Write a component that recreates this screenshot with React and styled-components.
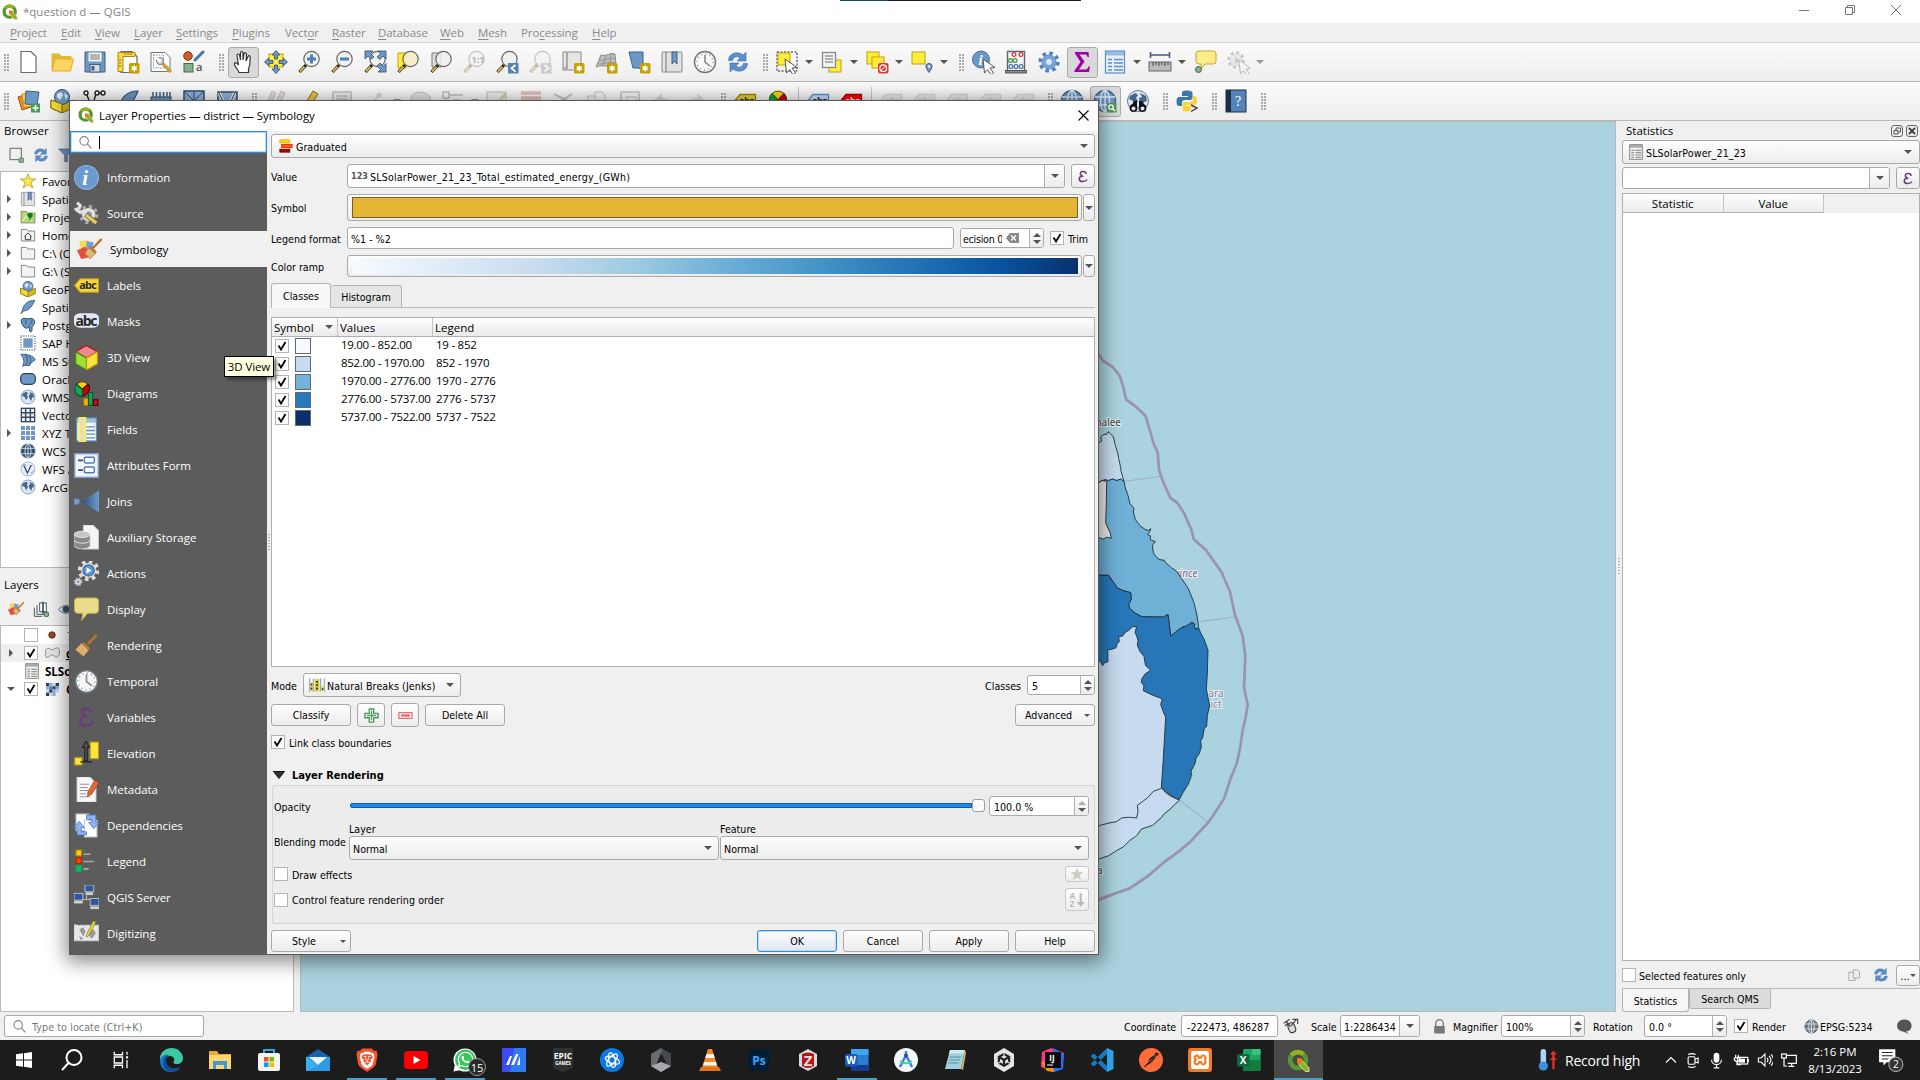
import React from "react";
import styled, { createGlobalStyle, css } from "styled-components";
import { SiBrave, SiUnity, SiPostman, SiXampp } from "react-icons/si";
import { FaWhatsapp } from "react-icons/fa";

const segoe = '"Open Sans", "Noto Sans", sans-serif';
const tahoma = '"DejaVu Sans Condensed", "Open Sans", sans-serif';

const Global = createGlobalStyle`
  * { box-sizing: border-box; }
  body { margin: 0; background: #f0f0f0; overflow: hidden; }
  svg { display: block; flex: none; }
`;

/* ---------- drawing helpers ---------- */
const Badge = () => (
  <g>
    <rect x="13" y="13" width="10.500" height="10.500" rx="1.500" fill="#c4a000" />
    <path d="M18.200 14.500l1 2.200 2.400-.4-1.500 2 1.500 2-2.400-.3-1 2.200-1-2.200-2.400.3 1.500-2-1.500-2 2.400.4z" fill="#fff" />
  </g>
);
const Lens = ({ children, fill = "#eeeeec" }) => (
  <g>
    <path d="M9 15L2.500 22" stroke="#222" strokeWidth="3.200" />
    <path d="M7.500 16.700L3 21.500" stroke="#e8b83a" strokeWidth="1.900" />
    <circle cx="14.500" cy="9" r="7.700" fill={fill} fillOpacity=".85" stroke="#666" strokeWidth="1.200" />
    {children}
  </g>
);
const Cursor = ({ x = 10, y = 8 }) => (
  <path transform={`translate(${x} ${y})`} d="M0 0l12 8.500-5 .5 3.500 5-2.500 1.800-3.300-5.200-3.200 3.400z" fill="#fff" stroke="#555" />
);
const Globe = ({ c = "#6d97c4" }) => (
  <g fill="none" stroke="#dce8f5" strokeWidth="1.300">
    <circle cx="12" cy="12" r="10.500" fill={c} stroke="#45607f" />
    <ellipse cx="12" cy="12" rx="4.500" ry="10.500" />
    <path d="M2 8h20M2 16h20M12 1.500v21" />
  </g>
);
const Earth = () => (
  <g>
    <circle cx="12" cy="12" r="10.500" fill="#dbe7f5" stroke="#5b7da5" />
    <path d="M4 7l5-3 3 2-2 3 2 3-3 5-2-5-4-2zM14 4l6 3 1 5-3 1-1 5-3-4-1-5 3-1z" fill="#45658b" />
  </g>
);
const Tag = ({ f, s, t = "#2b2b2b" }) => (
  <g>
    <path d="M7 5.500h15.500v12H7l-5-6z" fill={f} stroke={s} strokeWidth="1.300" />
    <text x="6" y="15" fontSize="9.500" fontWeight="700" fontFamily={segoe} fill={t} textLength="15">abc</text>
  </g>
);
const Brush = () => (
  <g>
    <path d="M21 2.500L14 10" stroke="#b5762a" strokeWidth="2.600" strokeLinecap="round" />
    <path d="M9.500 9l6 5.500-2 3-7.500-7z" fill="#b87a34" />
    <path d="M7 10l7 6.500-5 6L1.500 16z" fill="#e2b57a" stroke="#b5803f" strokeWidth=".8" />
    <path d="M6 12l5 8M4 14l5 7" stroke="#c9975a" strokeWidth=".7" />
  </g>
);
const Pencil = () => (
  <g><path d="M16 2l5 3-9 14-4 2.500-1-4.500z" fill="#e9c840" stroke="#7a6a20" /><path d="M8 21l1-4 3 2z" fill="#444" /></g>
);
const QLogo = () => (
  <g>
    <circle cx="11.500" cy="11.500" r="8.300" fill="none" stroke="#589632" strokeWidth="5" />
    <path d="M4.800 6.500A8.300 8.300 0 0 1 17 5.500" fill="none" stroke="#93b023" strokeWidth="5" />
    <path d="M12.500 12.500l3.500 0 7 7v4h-4l-6.500-7z" fill="#93b023" stroke="#fff" strokeWidth=".7" />
    <path d="M10.500 9.500l5 .5 1.500 2-5 4-1.500-1.500z" fill="#ee7913" />
  </g>
);
const Doc = ({ x = 4, w = 15 }) => (
  <path d={`M${x} 1.500h${w - 5}l5 5v16h-${w}z`} fill="#fff" stroke="#6a6a6a" strokeWidth="1.200" />
);
const Refresh = () => (
  <g fill="#5b8fcb" stroke="#3d6fa8" strokeWidth=".6">
    <path d="M2.500 10.500C2.500 3 12 .5 17 5l3-3v9h-9l3-3c-3-2.500-6.500-1-7.500 2.500z" />
    <path d="M21.500 13.500C21.500 21 12 23.500 7 19l-3 3v-9h9l-3 3c3 2.500 6.500 1 7.500-2.500z" />
  </g>
);
const Bin = () => (
  <g fill="#111">
    <circle cx="7.500" cy="19" r="3.900" /><circle cx="16.500" cy="19" r="3.900" />
    <path d="M8 12h3v6H5zM13 12h3l3 6h-6z" /><circle cx="7.500" cy="19.500" r="2" fill="#dbe7f5" /><circle cx="16.500" cy="19.500" r="2" fill="#dbe7f5" />
  </g>
);
const Gear = ({ cx = 12, cy = 12, r = 8, f = "#d3d7cf", s = "#777", inner = "#fff" }) => (
  <g>
    <circle cx={cx} cy={cy} r={r} fill="none" stroke={s} strokeWidth={r * 0.5} strokeDasharray={`${r * 0.393} ${r * 0.393}`} />
    <circle cx={cx} cy={cy} r={r * 0.85} fill={f} stroke={s} strokeWidth=".5" />
    <circle cx={cx} cy={cy} r={r * 0.4} fill={inner} stroke={s} strokeWidth=".5" />
  </g>
);
const Table = ({ c = "#5b8ec4", f = "#e8f1fb" }) => (
  <g>
    <rect x="2.500" y="1" width="19" height="22" fill={f} stroke={c} strokeWidth="1.200" />
    <rect x="3" y="1.500" width="18" height="4" fill={c} opacity=".55" />
    <path d="M5 9.500h4M11 9.500h9M5 13h4M11 13h9M5 16.500h4M11 16.500h9M5 20h4M11 20h9" stroke={c} strokeWidth="1.300" />
  </g>
);
const Folder = ({ children }) => (
  <g><path d="M2 3.500h8l2 2.500h10v15H2z" fill="#f3f3f3" stroke="#777" strokeWidth="1.300" />{children}</g>
);
const Book = () => (
  <g><rect x="2" y="2" width="20" height="20" rx="1" fill="#e2e2e2" stroke="#888" /><path d="M6 2v20" stroke="#999" strokeWidth="1.500" /><path d="M12 2h5v12l-2.500-3-2.500 3z" fill="#6d97c4" stroke="#3d5f88" /></g>
);
const Page = ({ x, y }) => <path d={`M${x} ${y}h7l3 3v10h-10z`} fill="#eee" stroke="#666" />;

const icons = {
  qgis: <QLogo />,
  doc: <Doc />,
  open: <g><path d="M1.500 20V3.500h8l2 2.500h10v4z" fill="#e2b93a" /><path d="M5 9h18.500l-3 12H2z" fill="#fcd462" stroke="#dcae2f" /></g>,
  save: <g><path d="M2 2h20v20H2z" fill="#6d97c4" stroke="#3f5f86" /><rect x="5.500" y="2.500" width="13" height="9" fill="#f5f5f5" /><path d="M7 5h10M7 7h10M7 9h10" stroke="#777" /><rect x="7" y="14.500" width="10" height="7.500" fill="#dedede" stroke="#3f5f86" /><rect x="8.500" y="16" width="3" height="4.500" fill="#3f5f86" /></g>,
  layout: <g><Doc x={5} w={16} /><path d="M2 2.500h17v4H7v15H2z" fill="#fcd94c" stroke="#b08d00" /><path d="M9 5V3M12 5V3M15 5V3M3 10h2M3 13h2M3 16h2" stroke="#8a6e00" /><Badge /></g>,
  layoutMgr: <g><path d="M2 2.500h14l5 5v14H2z" fill="#fff" stroke="#777" /><rect x="4.500" y="5" width="10" height="13" fill="none" stroke="#6d97c4" strokeDasharray="1.500 1" /><path d="M12 12l10 10" stroke="#c9a03a" strokeWidth="3.500" /><circle cx="11" cy="11" r="3.500" fill="#ddd" stroke="#777" /><path d="M8 8l3 3" stroke="#fff" strokeWidth="2.500" /></g>,
  style: <g><circle cx="6" cy="6" r="4.300" fill="#cf5a2a" stroke="#8a3512" /><rect x="2" y="13.500" width="9" height="8.500" fill="#86b08e" stroke="#426b4a" /><path d="M21 2l-8 8" stroke="#4677aa" strokeWidth="3" strokeLinecap="round" /><text x="14" y="21" fontSize="11.500" fontFamily={segoe} fill="#222">a</text></g>,
  hand: <path d="M8 22.500C7 19 2.500 15.500 3.500 13.500s3 0 4 1.500L6 5.500c0-2 2.300-2 2.600 0L9.500 10V3c0-2 2.500-2 2.500 0v7l1-6c.3-2 2.600-1.500 2.500.3L15 11l2-4.500c.8-1.500 2.500-.8 2.200.8C18.500 11 20 14 17.500 19v3.500z" fill="#fff" stroke="#333" strokeWidth="1.200" />,
  panSel: <g><rect x="5" y="4" width="14" height="13" fill="#ffec3d" stroke="#c4a000" /><path d="M12 .5l4 4.500h-2.500v4h-3V5H8zM12 23.500L8 19h2.500v-4h3v4H16zM.5 12L5 8v2.500h4v3H5V16zM23.500 12L19 8v2.500h-4v3h4V16z" fill="#6d97c4" stroke="#2f4d6e" strokeWidth=".8" /></g>,
  zoomIn: <Lens><path d="M14.500 4.500v9M10 9h9" stroke="#4b7fb8" strokeWidth="3" /></Lens>,
  zoomOut: <Lens><path d="M10 9h9" stroke="#4b7fb8" strokeWidth="3" /></Lens>,
  zoomFull: <g><Lens /><path d="M2 1h8L7.500 3.500 11 7 8 9 5 6 2 9zM23 1h-8l2.500 2.500L14 7l3 2.500L20 6l3 3zM23 22h-8l2.500-2.500L14 16l3-3 3 3.500 3-3z" fill="#6d97c4" stroke="#2f4d6e" strokeWidth=".8" /></g>,
  zoomSel: <g><path d="M2 3h8v15H2z" fill="#ffec3d" stroke="#c4a000" /><Lens fill="#f6efc0" /></g>,
  zoomLayer: <g><path d="M3 3h9v14H3z" fill="#ddd" stroke="#777" /><Lens /></g>,
  zoomNative: <Lens><text x="9.500" y="12.500" fontSize="9" fontFamily={segoe} fontWeight="700" fill="#333">1:1</text></Lens>,
  zoomLast: <g><Lens /><rect x="13" y="13" width="10.500" height="10.500" fill="#5682b3" /><path d="M20.500 15l-4 3.300 4 3.300" fill="none" stroke="#fff" strokeWidth="1.800" /></g>,
  zoomNext: <g><Lens /><rect x="13" y="13" width="10.500" height="10.500" fill="#888" /><path d="M16.500 15l4 3.300-4 3.300" fill="none" stroke="#fff" strokeWidth="1.800" /></g>,
  newMap: <g><path d="M2 2h18v18H2z" fill="#e6e6e6" stroke="#888" /><path d="M6 2v18M2 20l3-3" stroke="#aaa" strokeWidth="2" /><Badge /></g>,
  new3d: <g><path d="M7 5c6 2 8-3 14-1l1 11c-7 3-13-1-20 2z" fill="#bdbdbd" stroke="#8a8a8a" /><path d="M5 10c7 1 10-3 16-1M4 14c7 0 11-3 18-1M12 5l-3 11M17 4l-1 12" fill="none" stroke="#8a8a8a" strokeWidth=".8" /><Badge /></g>,
  newBook: <g><path d="M2 2h14v19l-4-3H6z" fill="#6d97c4" stroke="#3d5f88" /><Badge /></g>,
  book: <Book />,
  clock: <g><circle cx="12" cy="12" r="10.500" fill="#f7f7f7" stroke="#777" strokeWidth="1.500" /><circle cx="12" cy="12" r="8" fill="none" stroke="#6d97c4" strokeWidth="1.500" strokeDasharray="1 3.190" /><path d="M12 5v7l5 4" fill="none" stroke="#888" strokeWidth="1.600" /></g>,
  refresh: <Refresh />,
  selRect: <g><rect x="2" y="2" width="20" height="19" fill="none" stroke="#222" strokeDasharray="2 1.500" /><rect x="3" y="3" width="12" height="12" fill="#ffec3d" stroke="#c4a000" /><Cursor x={10} y={9} /></g>,
  selForm: <g><rect x="9" y="10" width="12" height="12" fill="#ffec3d" stroke="#c4a000" /><rect x="2.500" y="2.500" width="13" height="15" fill="#f3f3f3" stroke="#888" strokeWidth="1.300" /><path d="M5 6h8M5 9h8M5 12h8" stroke="#999" strokeWidth="1.500" /></g>,
  deselect: <g><rect x="2" y="2" width="12" height="12" fill="#ffec3d" stroke="#c4a000" /><rect x="7" y="7" width="12" height="11" fill="#ffec3d" stroke="#c4a000" /><rect x="13" y="13" width="10.500" height="10.500" rx="2" fill="#dc3b3b" /><circle cx="18.200" cy="18.200" r="3.300" fill="none" stroke="#fff" strokeWidth="1.200" /><path d="M16 20.500l4.500-4.500" stroke="#fff" /></g>,
  selLoc: <g><rect x="2" y="2" width="13" height="12" fill="#ffec3d" stroke="#c4a000" /><path d="M19 22.500c-4-5-4-9 0-9s4 4 0 9z" fill="#6d97c4" stroke="#45607f" /><circle cx="19" cy="16.500" r="1.200" fill="#fff" /></g>,
  identify: <g><circle cx="10" cy="9.500" r="8.500" fill="#6d97c4" stroke="#45709f" /><text x="7.500" y="15" fontSize="15" fontStyle="italic" fontWeight="700" fontFamily='"Liberation Serif", serif' fill="#fff">i</text><Cursor x={12} y={9} /></g>,
  abacus: <g><path d="M3 1.500h18M3.500 1v21M20.500 1v21" stroke="#666" strokeWidth="1.400" /><rect x="1.500" y="20.500" width="21" height="2.500" fill="#888" stroke="#444" strokeWidth=".8" /><g fill="#fff" strokeWidth="1.200"><g stroke="#c33"><circle cx="10" cy="4.500" r="1.900" /><circle cx="17" cy="4.500" r="1.900" /></g><g stroke="#3a9a3a"><circle cx="6.500" cy="10.500" r="1.900" /><circle cx="11" cy="10.500" r="1.900" /></g><g stroke="#3d6fa8"><circle cx="7" cy="16.500" r="1.900" /><circle cx="12" cy="16.500" r="1.900" /><circle cx="17" cy="16.500" r="1.900" /></g></g></g>,
  gear: <Gear r={8.500} f="#78a4dc" s="#4f7fbd" inner="#dce9f8" />,
  sigma: <path d="M5 2h13.500l.5 5h-1.500c-.5-2-1.500-2.500-3-2.500H9.500l5 7-5.500 8h6c2 0 3-1 3.500-3H20l-1 5.500H4.500v-1.500l6-8.500L5 3.500z" fill="#a000a8" />,
  table: <Table />,
  ruler: <g><path d="M2 5h20M2.500 2v6M21.500 2v6" stroke="#3f5f86" strokeWidth="1.600" /><rect x="1" y="12" width="22" height="9" fill="#bbb" stroke="#666" /><path d="M5 12v4M8 12v3M11 12v4M14 12v3M17 12v4M20 12v3" stroke="#444" /></g>,
  tip: <g><path d="M6 1h14a3 3 0 0 1 3 3v7a3 3 0 0 1-3 3h-8l-4 5v-5H6a3 3 0 0 1-3-3V4a3 3 0 0 1 3-3z" fill="#f9ec8c" stroke="#c9a52a" /><circle cx="5.500" cy="19.500" r="3" fill="#86b08e" stroke="#426b4a" /></g>,
  actions: <g><Gear cx={10} cy={10} r={7} /><path d="M9 7.500l5 3-5 3z" fill="#777" /><Cursor x={13} y={10} /></g>,
  layersAdd: <g><path d="M1 8l9-3 4 13-9 3z" fill="#e5883a" stroke="#a84f12" /><path d="M5 5l10-2 2 14-10 1z" fill="#fcd94c" stroke="#c4a000" /><path d="M9 2l13 1-2 13-12-1z" fill="#6d97c4" stroke="#3f5f86" /><rect x="14" y="14.500" width="9" height="9" fill="#4f9a58" /><path d="M18.500 16v6M15.500 19h6" stroke="#fff" strokeWidth="1.600" /></g>,
  geopkg: <g><path d="M1 11l11 4 11-4v8l-11 5-11-5z" fill="#d8b91c" stroke="#7d6a0a" /><circle cx="12" cy="8" r="7.500" fill="#6d97c4" stroke="#34506f" /><path d="M7 5l4-2 2 3-3 5-3-3zM14 4l4 3-2 4z" fill="#dbe7f5" /><path d="M1 11l11 4v9l-11-5z" fill="#f3d936" stroke="#7d6a0a" /></g>,
  shp: <g fill="none" stroke="#222" strokeWidth="1.400"><path d="M3 4l6 14 4-13 6-1" /><circle cx="3" cy="4" r="2" fill="#fff" /><circle cx="14" cy="4" r="2" fill="#fff" /><circle cx="20" cy="4" r="2" fill="#fff" /></g>,
  feather: <path d="M22 2C12 2 5 8 3.500 17L1.500 22l4-4C14 17 18 12 22 2z" fill="#6d97c4" stroke="#34506f" strokeWidth="1.200" />,
  chip: <g><rect x="2" y="8" width="20" height="12" fill="#6d97c4" stroke="#34506f" /><path d="M4 8V3M7.500 8V3M11 8V3M14.500 8V3M18 8V3M21 8V3" stroke="#34506f" strokeWidth="1.400" /></g>,
  mesh: <g><rect x="2" y="2" width="20" height="20" fill="#8db0da" stroke="#2f4d6e" strokeWidth="1.500" /><path d="M2 2l20 20M22 2L2 22M12 2v10" stroke="#2f4d6e" /></g>,
  virtual: <g><rect x="3" y="3" width="19" height="19" fill="#8db0da" stroke="#2f4d6e" strokeWidth="1.500" /><path d="M4 4l8 16 8-16" fill="none" stroke="#fff" strokeWidth="3" /><path d="M4 4l8 16 8-16" fill="none" stroke="#222" /></g>,
  pencils: <g><path d="M8 2l4 2-7 14-3 2V16zM17 2l4 2-8 16-3 1V17z" fill="#c9a0a0" stroke="#666" /></g>,
  pencil: <Pencil />,
  saveEdit: <g><rect x="3" y="3" width="18" height="16" fill="#ddd" stroke="#555" strokeWidth="1.500" /><path d="M6 7h12M6 10h12" stroke="#555" strokeWidth="1.500" /></g>,
  addPt: <g><path d="M4 20L15 7" stroke="#555" /><circle cx="16" cy="6" r="2.500" fill="#999" /></g>,
  poly: <path d="M3 8c3-7 16-6 19 0s-5 7-9 5-9 5-10-5z" fill="#bbb" stroke="#555" />,
  node: <g fill="none" stroke="#555" strokeWidth="1.500"><rect x="2" y="3" width="6" height="6" /><path d="M8 6h14M12 11h8M5 9v10" /></g>,
  attrEdit: <g><rect x="1" y="3" width="19" height="16" fill="#ddd" stroke="#555" /><path d="M20 4L9 18" stroke="#a08a20" strokeWidth="3" /></g>,
  del: <g><path d="M2 4h20M2 9h20M2 14h20" stroke="#c05050" strokeWidth="3.500" /></g>,
  cut: <path d="M2 5l18 9M20 5L4 15" stroke="#555" strokeWidth="1.600" />,
  copy: <g><Page x={3} y={7} /><Page x={10} y={3} /></g>,
  paste: <g><rect x="3" y="3" width="18" height="18" fill="#eee" stroke="#666" strokeWidth="1.500" /><rect x="9" y="8" width="9" height="9" fill="#fff" stroke="#666" /></g>,
  undo: <path d="M2 12l9-8v5c7 0 10 4 10 10-3-4-5-5-10-5v5z" fill="#b09a90" />,
  redo: <path d="M22 12l-9-8v5C6 9 3 13 3 19c3-4 5-5 10-5v5z" fill="#aaa" />,
  tagY: <Tag f="#e6cd3a" s="#a08500" />,
  tagB: <Tag f="#c9dcf5" s="#5a8fd6" />,
  tagR: <Tag f="#f00" s="#a00" t="#fff" />,
  tagG: <Tag f="#d5d5cc" s="#999" t="#888" />,
  pie: <g><path d="M12 11L6 4.500a9 9 0 0 1 12 0z" fill="#ffd400" stroke="#665500" /><path d="M12 11l6-6.500c4 4 3 11-1 13z" fill="#d00000" stroke="#500" /><path d="M12 11L6 4.500C2 8 3 15 7 17.500z" fill="#1aa33c" stroke="#053" /></g>,
  globe: <Globe />,
  globeDark: <Globe c="#34506f" />,
  globeZ: <g><Globe /><rect x="14" y="14" width="9.500" height="9.500" fill="#4f9a58" /><circle cx="18" cy="18" r="2.200" fill="none" stroke="#fff" strokeWidth="1.300" /><path d="M19.500 19.500l2.500 2.500" stroke="#fff" strokeWidth="1.300" /></g>,
  globeB: <g><Earth /><Bin /></g>,
  python: <g><path d="M12 1.500c-5 0-5 1.500-5 3V7h6v1H4.500C2 8 1.500 10 1.500 12.500S2 17 4.500 17H7v-3c0-2 1-3 3-3h5c1.500 0 2.500-1 2.500-2.500v-4c0-2-1.500-3-5.500-3z" fill="#3b76a8" /><path d="M11 22.500c5 0 5-1.500 5-3V17h-5v-1h8c2.500 0 3-2 3-4.500S21.500 7 19 7h-1v3c0 2-1 3-3 3h-5c-1.500 0-2.500 1-2.500 2.500v4c0 2 0 3 3.500 3z" fill="#fbd43c" /><path d="M16 16l6 3-6 3.500" fill="none" stroke="#444" strokeWidth="1.400" /></g>,
  help: <g><rect x="2" y="1" width="20" height="22" fill="#5384ba" stroke="#1d2f45" /><rect x="2" y="1" width="5" height="22" fill="#1d2f45" /><text x="11" y="17" fontSize="14" fontFamily='"Liberation Serif", serif' fill="#fff">?</text></g>,
  addBox: <g><rect x="3" y="2" width="17" height="17" fill="none" stroke="#666" strokeWidth="1.500" /><circle cx="20" cy="20" r="4" fill="#86b08e" stroke="#426b4a" /></g>,
  filter: <path d="M1 3h21l-8 9v10h-4V12z" fill="#6d97c4" stroke="#45607f" />,
  star: <path d="M12 1l3 8h8.500l-7 5 2.700 8.500L12 17.500 4.800 22.500 7.500 14l-7-5H9z" fill="#fbe84b" stroke="#a58a10" />,
  project: <g><path d="M1.500 3.500h8l2 2.500h11v15h-21z" fill="#b5d96a" stroke="#667" /><path d="M4 18l6-8 8 9" fill="none" stroke="#fff" strokeWidth="1.500" /><path d="M15 17V8" stroke="#0b7d1c" strokeWidth="2" /><circle cx="15" cy="9.500" r="4" fill="#0b7d1c" /></g>,
  home: <Folder><path d="M6.500 14L12 9l5.500 5M8 13.500V19h8v-5.500" fill="none" stroke="#444" strokeWidth="1.500" /></Folder>,
  folder: <Folder />,
  elephant: <g><path d="M2 4c3-3 7-2 10-1 4-2 9-1 10 4 0 4-3 7-4 8v5c0 3-4 3-4 0v-6l-4 3-3-1C4 13 1 8 2 4z" fill="#6d97c4" stroke="#2f4d6e" strokeWidth="1.500" /><path d="M9 4v7M17 4c2 3 0 6-3 7" fill="none" stroke="#2f4d6e" strokeWidth="1.300" /></g>,
  sap: <g><rect x="1.500" y="1.500" width="21" height="21" fill="none" stroke="#222" strokeWidth="1.500" strokeDasharray="1.500 2" /><rect x="5" y="5" width="14" height="14" fill="#6d97c4" /></g>,
  mssql: <path d="M1 2c8-1 20 2 22 8-3 3-7 4-9 9C9 19 8 18 4 20c3-7 2-12-3-18zM8 2c4 6 4 12 0 17M13 4c4 5 4 10 0 14" fill="#6d97c4" stroke="#34506f" strokeWidth="1.200" />,
  oracle: <rect x="1" y="4" width="22" height="16" rx="6" fill="#6d97c4" stroke="#2c425c" strokeWidth="1.800" />,
  earth: <Earth />,
  grid: <g><rect x="2" y="2" width="20" height="20" fill="#eef3f9" stroke="#3a4a5c" strokeWidth="2" /><path d="M2 8.500h20M2 15.500h20M8.500 2v20M15.500 2v20" stroke="#3a4a5c" strokeWidth="2.200" /></g>,
  dots9: <g fill="#6d97c4">{[1.500, 9, 16.500].map((x) => [1.500, 9, 16.500].map((y) => <rect key={x + "-" + y} x={x} y={y} width="6" height="6" />))}</g>,
  wfs: <g><circle cx="12" cy="12" r="10.500" fill="#e8eff8" stroke="#6d97c4" /><path d="M3 8l4-3 2 3M16 19l4-4" fill="none" stroke="#6d97c4" strokeWidth="1.500" /><path d="M6 7l5 11 6-12" fill="none" stroke="#34506f" strokeWidth="2" /></g>,
  info: <g><circle cx="12" cy="12" r="11.500" fill="#6b9ad0" stroke="#8db4e2" /><text x="8" y="19" fontSize="20" fontStyle="italic" fontWeight="700" fontFamily='"Liberation Serif", serif' fill="#fff">i</text></g>,
  source: <g><Gear cx={14} cy={13} r={7.500} f="#e4e4e4" s="#aaa" inner="#6d97c4" /><path d="M3 1.500l3 3-1 2.500-3 1C4 11 7 11 9 9.500L20 21" fill="none" stroke="#e0e0e0" strokeWidth="3" /><path d="M11 13l11 8.500" stroke="#6e5a22" strokeWidth="4.600" /><path d="M11.500 13.400l10 7.700" stroke="#e5c76c" strokeWidth="3.200" /></g>,
  symbology: (
    <g>
      <path d="M2 4l9-1 2 6-9 3z" fill="#fcd94c" />
      <path d="M9 4l7 1-1 8-6-1z" fill="#6f9fdc" />
      <path d="M0 13l8-4 6 10-10 2z" fill="#e3503f" />
      <path d="M23 2.500l-7 7.500" stroke="#b5762a" strokeWidth="2.200" strokeLinecap="round" />
      <path d="M13 8.500l6 5.500-1.500 2.500-7-5.500z" fill="#b87a34" />
      <path d="M11.500 10.500l6 5.500-5 5-5-5.500z" fill="#e2b57a" stroke="#b5803f" strokeWidth=".7" />
    </g>
  ),
  labels: <g><path d="M6 5.500h17.500v13H6L.5 12z" fill="#f4d73a" stroke="#c0a010" /><text x="5" y="15.500" fontSize="10.500" fontWeight="700" fontFamily={segoe} fill="#2b2b2b" textLength="17">abc</text></g>,
  masks: <g><rect x="-.5" y="4" width="25" height="14" rx="6" fill="#dfe6f5" /><text x="1.500" y="16.500" fontSize="13.500" fontWeight="700" fontFamily={segoe} fill="#2b2b2b" textLength="21">abc</text></g>,
  cube: <g strokeLinejoin="round"><path d="M12 .5l10.500 6L12 12.500 1.500 6.500z" fill="#f28a8a" stroke="#b11" strokeWidth="1.200" /><path d="M1.500 6.500l10.500 6v11.500L1.500 18z" fill="#9be03a" stroke="#3c8a12" strokeWidth="1.200" /><path d="M22.500 6.500L12 12.500V24l10.500-6z" fill="#fbe33c" stroke="#c09a10" strokeWidth="1.200" /></g>,
  diagrams: <g><path d="M8 8L2.500 3a8 8 0 0 1 11 0z" fill="#ffcf00" stroke="#443" /><path d="M8 8l5.500-5c3 4 2 8-5.500 12z" fill="#c00" stroke="#400" /><path d="M8 8v7C1 14-1 8 2.500 3z" fill="#17a35a" stroke="#053" /><rect x="9.500" y="17" width="4" height="6.500" fill="#ffb400" stroke="#b87a00" /><rect x="14" y="11" width="4" height="12.500" fill="#17a35a" stroke="#053" /><rect x="18.500" y="18" width="4.500" height="5.500" fill="#b11" stroke="#500" /></g>,
  fields: <g><Table f="#f3f7fc" /><rect x="5" y="0" width="6" height="24" fill="#e9dfb0" stroke="#fdf24c" strokeWidth="1.500" /></g>,
  form: <g><rect x=".7" y=".7" width="22.600" height="22.600" fill="#f2f5f9" stroke="#7fa3cd" strokeWidth="1.400" /><rect x="10" y="4" width="9.500" height="5.500" rx="1" fill="#fff" stroke="#4b7fb8" strokeWidth="1.400" /><rect x="10" y="13.500" width="9.500" height="5.500" rx="1" fill="#fff" stroke="#4b7fb8" strokeWidth="1.400" /><path d="M4 7h4.500M4 16.500h4.500" stroke="#3a4a5c" strokeWidth="1.600" /></g>,
  joins: <g><circle cx="2.500" cy="12" r="3" fill="#6d9bd0" /><path d="M7 12L24 1.500v21z" fill="url(#joinFade)" /></g>,
  aux: <g><path d="M9 0h9l5.500 5.500V23H9z" fill="#f5f5f5" stroke="#ccc" /><path d="M0 9v11c2 4 14 4 15.500 0V9z" fill="#888" stroke="#ddd" strokeWidth=".8" /><ellipse cx="7.700" cy="9" rx="7.700" ry="3" fill="#c5c5c5" stroke="#eee" strokeWidth=".8" /><path d="M0 14.500c2 4 14 4 15.500 0" fill="none" stroke="#ddd" /></g>,
  act: <g><Gear cx={14} cy={9} r={8.300} f="#e4e4e4" s="#ddd" /><circle cx="14" cy="9" r="5.500" fill="#5b93d3" stroke="#35659c" /><path d="M12 6l5 3-5 3z" fill="#fff" /><Gear cx={4} cy={20} r={3.300} f="#ddd" s="#ccc" inner="#5b93d3" /></g>,
  display: <path d="M4 1h16q3.500 0 3.500 3.500V12q0 3.500-3.500 3.500h-7L7.500 22l1-6.500H4Q.5 15.500.5 12V4.500Q.5 1 4 1z" fill="#e9dc8c" stroke="#c9b44c" />,
  brush: <Brush />,
  epsilonBig: <path d="M17 7C16 2.500 8.500 2.500 8 6.500c-.2 2.500 2 4.500 4.500 4.500-4.500 0-7 2-6.500 5.500.7 4.500 10 4.500 12 0" fill="none" stroke="#6c3d78" strokeWidth="2.600" strokeLinecap="round" />,
  elev: <g><rect x="15.500" y="1" width="8" height="16" fill="#fbe33c" stroke="#b79a10" /><rect x=".7" y="16" width="7" height="7" fill="#fbe33c" stroke="#b79a10" /><path d="M6 20h11" stroke="#222" strokeWidth="1.200" /><path d="M10.300 19V5.500l-2.300 1 3.500-6.500 3.500 6.500-2.300-1V19z" fill="#555" stroke="#111" strokeWidth=".8" /></g>,
  meta: <g><path d="M3 0h12l6 6v18H3z" fill="#f7f7f7" stroke="#ddd" /><path d="M5.500 7h9M5.500 10h8M5.500 13h8M5.500 16h6M5.500 19h10" stroke="#999" /><path d="M20 3l4 2.500-7 11-4 2 .5-4.500z" fill="#e0673a" stroke="#9c3c14" strokeWidth=".7" /></g>,
  deps: <g><rect x="2" y="1" width="12" height="16" fill="#fff" stroke="#ccc" /><rect x="10" y="7" width="12" height="16" fill="#fff" stroke="#ccc" /><path d="M12 2h9v7h3l-5 6-5-6h3V6h-5zM12 21H3v-7H0l5-6 5 6H7v4h5z" fill="#8fb4ee" stroke="#4b7fc8" strokeWidth=".8" /></g>,
  legend: <g><path d="M9 5h7M9 12h10M9 19h5" stroke="#aaa" strokeWidth="1.600" /><rect x="2" y="1" width="5" height="5.500" fill="#ffcf00" stroke="#c48a00" /><rect x="2" y="8.500" width="5" height="5.500" fill="#f40" stroke="#b32500" /><rect x="2" y="16" width="5" height="5.500" fill="#12b85a" stroke="#0a6" /></g>,
  server: <g><path d="M12 10v4H5M12 14h8" stroke="#bbb" fill="none" /><g stroke="#ccc" strokeWidth=".8"><rect x="10.500" y="0" width="8.500" height="6.500" fill="#2c5a9e" /><rect x="11.500" y="7.500" width="6.500" height="1.800" fill="#ddd" /><rect x="0" y="8" width="8.500" height="6.500" fill="#2c5a9e" /><rect x="0" y="15.500" width="8" height="1.800" fill="#ddd" /><rect x="15.500" y="13" width="8.500" height="6.500" fill="#2c5a9e" /><rect x="16" y="21" width="8" height="1.800" fill="#ddd" /></g></g>,
  digit: <g><path d="M0 4c3-1 4 1 6 0h17.500v15H0z" fill="#e8e8e8" stroke="#ccc" /><path d="M5 8l4-2 2 4-2 5zM13 9l6-1 2 4-4 5-3-3zM5 14l4 3-3 1z" fill="#999" /><path d="M21 1l-7 13-2 1.500V13L18.500 0z" fill="#e9d64c" stroke="#8a7a20" strokeWidth=".7" /></g>,
  grad: <g strokeWidth="1.500"><rect x="1.500" y="1.500" width="17" height="5" fill="#ffe000" stroke="#ffa400" /><rect x="4.500" y="9.500" width="18" height="5" fill="#ff5a1a" stroke="#d03000" /><rect x="1.500" y="17.500" width="17" height="5" fill="#b00000" stroke="#700000" /></g>,
  jenks: <g><path d="M1 2v20M6.500 2v20M17.500 2v20M23 2v20" stroke="#5b8fcb" strokeWidth="1.200" /><g fill="#e8d53a"><rect x="1.700" y="8" width="4" height="13" /><rect x="9" y="4" width="6" height="17" stroke="#b09a10" strokeWidth=".6" /><rect x="18.500" y="14" width="3.700" height="7" /></g><g fill="#222"><rect x="2.500" y="10" width="2.500" height="2.500" /><rect x="2.500" y="16" width="2.500" height="2.500" /><rect x="10.700" y="6" width="2.700" height="2.500" /><rect x="10.700" y="11" width="2.700" height="2.500" /><rect x="10.700" y="16" width="2.700" height="2.500" /><rect x="19.300" y="17" width="2.200" height="2.500" /></g></g>,
  plus: <path d="M8.500 1.500h7v7h7v7h-7v7h-7v-7h-7v-7h7zM12 4.500v15M4.500 12h15" fill="#fff" stroke="#4f9a58" strokeWidth="2.200" />,
  minus: <g><rect x="1.500" y="7.500" width="21" height="9" fill="#fff" stroke="#ee5a5a" strokeWidth="1.800" /><path d="M5 12h14" stroke="#ee5a5a" strokeWidth="3.500" /></g>,
  search: <g fill="none" stroke="#858585" strokeWidth="2.200"><circle cx="9.500" cy="9" r="7.800" /><path d="M15 14.500l8 8.500" /></g>,
  layerNew: <g fill="none" stroke="#555" strokeWidth="1.500"><path d="M6 6v14h12M2 10v13h12" /><rect x="10" y="3" width="10" height="13" fill="#fff" /><path d="M15 1v18" stroke="#34506f" strokeWidth="2.500" /><circle cx="20" cy="20" r="3.800" fill="#86b08e" stroke="#426b4a" /></g>,
  eye: <g><path d="M1 13C5 5 19 5 23 13c-4 7-18 7-22 0z" fill="#dbe7f5" stroke="#777" strokeWidth="1.500" /><circle cx="12" cy="12.500" r="5" fill="#34506f" /></g>,
  polyLayer: <path d="M2 7c5-6 8 2 12-1s8-3 8 4-4 9-8 5-8 5-11 2 1-4-1-10z" fill="#e5e5e5" stroke="#888" strokeWidth="1.300" />,
  tableGray: <Table c="#777" f="#eee" />,
  raster: <g>{["#2c3e5c", "#8fadd4", "#c9d9ee", "#2c3e5c", "#8fadd4", "#5b7da5", "#2c4a75", "#8fadd4", "#c9d9ee", "#2c3e5c", "#8fadd4", "#c9d9ee", "#2c3e5c", "#c9d9ee", "#8fadd4", "#fff"].map((c, i) => <rect key={i} x={(i % 4) * 6} y={Math.floor(i / 4) * 6} width="6" height="6" fill={c} />)}</g>,
  lock: <g><path d="M6 11V7a6 6 0 0 1 12 0v4" fill="none" stroke="#888" strokeWidth="2.500" /><rect x="3.500" y="11" width="17" height="12" rx="1.500" fill="#777" /></g>,
  globeG: <Globe c="#777" />,
  bubble: <path d="M12 2c13 0 13 17 2 17l5 4-9-4C-2 18-1 2 12 2z" fill="#555" />,
  mouse: <g fill="none" stroke="#444" strokeWidth="1.800"><rect x="8" y="7" width="10" height="15" rx="5" transform="rotate(-20 13 14)" fill="#ddd" /><path d="M1 8l9-6M12 12L20 2M3 12l5-5M14 2h8v7M5 5l6 8" /></g>,
  starGray: <path d="M12 1l3 8h8.500l-7 5 2.700 8.500L12 17.500 4.800 22.500 7.500 14l-7-5H9z" fill="#d0cbb8" stroke="#c4c4c4" />,
  az: <g fill="#b8b8b8" fontFamily={segoe} fontWeight="700" fontSize="12"><text x="1" y="10.500">A</text><text x="1" y="22">Z</text><path d="M16 2h3v13h4.500l-6 7-6-7H16z" /></g>,
};

const Ico = ({ n, s = 24, o = 1 }) => (
  <svg width={s} height={s} viewBox="0 0 24 24" opacity={o}>{icons[n]}</svg>
);

/* ---------- generic widgets ---------- */
const btnFace = css`
  background: linear-gradient(#fefefe, #ececec);
  border: 1px solid #a9a9a9;
  border-radius: 3px;
`;
const Arrow = styled.i`
  flex: none;
  border: solid transparent;
  border-width: ${(p) => (p.$small ? "3px 3px 0" : "4px 4px 0")};
  border-top-color: ${(p) => p.$c || "#555"};
  ${(p) => p.$up && "transform: rotate(180deg);"}
`;
const Label = styled.span`
  font: ${(p) => (p.$b ? "bold " : "")}${(p) => p.$fs || 10.6}px ${tahoma};
  letter-spacing: ${(p) => p.$ls || 0}px;
  color: ${(p) => p.$c || "#000"};
  white-space: nowrap;
  width: ${(p) => (p.$w ? p.$w + "px" : "auto")};
  padding-top: ${(p) => p.$pt ?? 1}px;
  flex: none;
`;
const Ui = styled.span`
  font: ${(p) => (p.$b ? "bold " : "")}${(p) => p.$fs || 11.5}px ${segoe};
  letter-spacing: ${(p) => p.$ls || 0}px;
  color: ${(p) => p.$c || "#000"};
  white-space: nowrap;
  flex: none;
`;
const Button = styled.div`
  ${btnFace}
  width: ${(p) => p.$w || 80}px;
  height: ${(p) => p.$h || 22}px;
  display: flex;
  align-items: center;
  justify-content: center;
  flex: none;
  ${(p) => p.$focus && "border-color: #308cde; box-shadow: inset 0 0 0 1px #b9dcf7; background: linear-gradient(#fdfeff, #dfe6ee);"}
  ${(p) => p.$off && "border-color: #c8c8c8;"}
`;
const MenuButton = styled(Button)`
  justify-content: space-between;
  padding: 0 4px 0 ${(p) => p.$pl || 20}px;
`;
const Field = styled.div`
  background: ${(p) => (p.$combo ? "linear-gradient(#fefefe, #ececec)" : "#fff")};
  border: 1px solid #a9a9a9;
  border-radius: 3px;
  height: ${(p) => p.$h || 22}px;
  ${(p) => (p.$w ? `width: ${p.$w}px; flex: none;` : "flex: 1;")}
  display: flex;
  align-items: center;
  overflow: hidden;
  padding-left: ${(p) => p.$pl ?? 4}px;
`;
const Grow = styled.div`flex: 1;`;
const DropCell = styled.div`
  width: ${(p) => p.$w || 20}px;
  align-self: stretch;
  display: flex;
  align-items: center;
  justify-content: center;
  background: linear-gradient(#fefefe, #ececec);
  border-left: ${(p) => (p.$plain ? "none" : "1px solid #b0b0b0")};
  ${(p) => p.$plain && "background: none;"}
  flex: none;
`;
const SpinCell = styled(DropCell)`
  width: 14px;
  flex-direction: column;
  gap: 3px;
`;
const Spin = ({ w, children, pl = 4, topOff, h = 20 }) => (
  <Field $w={w} $h={h} $pl={pl}>
    {children}
    <Grow />
    <SpinCell><Arrow $up $c={topOff && "#aaa"} /><Arrow /></SpinCell>
  </Field>
);
const Box = styled.div`
  width: 14px; height: 14px;
  border: 1px solid #b4b4b4;
  background: #fff;
  flex: none;
`;
const Check = ({ on }) => (
  <Box>
    {on && <svg width="12" height="12" viewBox="0 0 12 12"><path d="M2.500 5.500L5 9.500 9.500 2" fill="none" stroke="#000" strokeWidth="1.800" /></svg>}
  </Box>
);

/* ---------- main window ---------- */
const Screen = styled.div`
  position: relative;
  width: 1920px; height: 1080px;
  display: flex; flex-direction: column;
  background: #f0f0f0;
  overflow: hidden;
`;
const TitleBar = styled.div`
  height: 23px; flex: none;
  background: #fff;
  display: flex; align-items: center;
  padding: 0 18px 0 2px;
  gap: 5px;
`;
const WinButtons = styled.div`
  display: flex; gap: 34px;
  padding-bottom: 3px;
`;
const Strip = styled.div`
  position: absolute; left: 840px; top: 0;
  width: 241px; height: 1px;
  background: linear-gradient(90deg, #0b4a73 48px, #1c1c1c 48px);
`;
const MenuBar = styled.div`
  height: 20px; flex: none;
  border-bottom: 1px solid #d5d5d5;
  display: flex; align-items: center;
  padding-left: 10px;
`;
const MenuItem = styled.div`
  width: ${(p) => p.$w}px;
  font: 11.5px ${segoe};
  letter-spacing: -0.1px;
  color: #8b8b8b;
  white-space: nowrap;
  u { text-underline-offset: 2px; }
`;
const ToolBar = styled.div`
  height: 39px; flex: none;
  display: flex; align-items: center;
  background: linear-gradient(#fbfbfb, #ededed);
  border-bottom: 1px solid #b9b9b9;
`;
const Tool = styled.div`
  width: 33px; height: 39px;
  display: flex; align-items: center; justify-content: center;
  flex: none;
`;
const Pressed = styled.div`
  width: 31px; height: 31px;
  border: 1px solid #aaa; border-radius: 3px;
  background: #d9d9d9;
  display: flex; align-items: center; justify-content: center;
`;
const ArrowCell = styled.div`
  width: 12px; display: flex; flex: none;
  padding-left: 1px;
`;
const Handle = styled.div`
  width: ${(p) => (p.$first ? 12.5 : 16)}px;
  padding-left: ${(p) => (p.$first ? 4 : 8)}px;
  flex: none;
  &::before {
    content: "";
    display: block;
    width: 5px; height: 17px;
    background: radial-gradient(circle at 1px 1px, #aaa 0.8px, transparent 1px) 0 0 / 3px 3px;
  }
`;
const Sep = styled.div`
  width: 7px; height: 29px; flex: none;
  background: linear-gradient(#c4c4c4, #c4c4c4) center / 1px 100% no-repeat;
`;

const bar1 = "H1 doc open save layout layoutMgr style | *hand panSel zoomIn zoomOut zoomFull zoomSel zoomLayer -zoomNative zoomLast -zoomNext newMap new3d newBook book clock refresh | selRect v selForm v deselect v selLoc v | identify abacus gear *sigma table v ruler v tip -actions w".split(" ");
const bar2 = "H1 layersAdd geopkg shp feather chip mesh virtual | -pencils pencil -saveEdit -addPt w -poly -node w -attrEdit -del -cut -copy -paste -undo -redo | tagY pie ; tagB tagR ; -tagG -tagG -tagG -tagG -tagG | globe *globeZ globeB | python | help |".split(" ");

const Tools = ({ items }) => (
  <ToolBar>
    {items.map((t, i) => {
      if (t === "H1") return <Handle key={i} $first />;
      if (t === "|") return <Handle key={i} />;
      if (t === ";") return <Sep key={i} />;
      if (t === "v" || t === "w") return <ArrowCell key={i}><Arrow $c={t === "w" ? "#999" : undefined} /></ArrowCell>;
      if (t[0] === "*") return <Tool key={i}><Pressed><Ico n={t.slice(1)} /></Pressed></Tool>;
      if (t[0] === "-") return <Tool key={i}><Ico n={t.slice(1)} o={0.35} /></Tool>;
      return <Tool key={i}><Ico n={t} /></Tool>;
    })}
  </ToolBar>
);

const menus = [["", "P", "roject", 51], ["", "E", "dit", 34], ["", "V", "iew", 39], ["", "L", "ayer", 42], ["", "S", "ettings", 56], ["", "P", "lugins", 53], ["Vect", "o", "r", 47], ["", "R", "aster", 46], ["", "D", "atabase", 62], ["", "W", "eb", 38], ["", "M", "esh", 43], ["Pro", "c", "essing", 71], ["", "H", "elp", 40]];

const Body = styled.div`
  flex: 1; min-height: 0;
  display: flex;
`;
const LeftDock = styled.div`
  width: 294px; flex: none;
  display: flex; flex-direction: column;
`;
const DockTitle = styled.div`
  height: 18px; flex: none;
  padding-left: 4px;
  display: flex; align-items: center;
  margin-top: ${(p) => p.$mt || 0}px;
`;
const DockTools = styled.div`
  height: 32px; flex: none;
  display: flex; align-items: center;
  gap: 9px;
  padding-left: 8px;
`;
const Tree = styled.div`
  height: ${(p) => p.$h}px; flex: none;
  background: #fff;
  border: 1px solid #b9b9b9;
  overflow: hidden;
`;
const TreeRow = styled.div`
  height: 18px;
  display: flex; align-items: center;
  background: ${(p) => (p.$sel ? "#f0f0f0" : "none")};
`;
const Expander = styled.div`
  width: ${(p) => p.$w || 19}px; padding-left: ${(p) => (p.$w ? 6 : 4)}px;
  display: flex; flex: none;
  i { transform: rotate(${(p) => (p.$open ? 0 : -90)}deg); visibility: ${(p) => (p.$show ? "visible" : "hidden")}; }
`;
const Slot = styled.div`
  width: ${(p) => p.$w}px; flex: none;
  display: flex; align-items: center;
  ${(p) => p.$clip && "overflow: hidden;"}
`;
const MapFrame = styled.div`
  width: 1316px; height: 891px;
  margin-left: 6px;
  border: 1px solid #b9b9b9;
  background: #aad3df;
  flex: none;
`;
const SplitV = styled.div`
  width: ${(p) => p.$w}px; flex: none;
  display: flex; align-items: center; justify-content: center;
  &::before {
    content: ""; width: 2px; height: 18px;
    background: repeating-linear-gradient(#aaa 0 1px, transparent 1px 3px);
  }
`;
const RightDock = styled.div`
  flex: 1; min-width: 0;
  display: flex; flex-direction: column;
  overflow: hidden;
`;
const RTitle = styled.div`
  height: 19px; flex: none;
  display: flex; align-items: center;
  padding: 0 2px 0 4px;
  gap: 3px;
`;
const HRow = styled.div`
  display: flex; align-items: center;
  height: ${(p) => p.$h}px;
  margin-top: ${(p) => p.$mt || 0}px;
  padding-left: ${(p) => p.$pl || 0}px;
  padding-right: ${(p) => p.$pr || 0}px;
  gap: ${(p) => p.$gap || 0}px;
  flex: none;
`;
const StatTable = styled.div`
  height: 768px; flex: none;
  margin-top: 4px;
  border: 1px solid #b0b0b0;
  background: #fff;
`;
const StatHead = styled.div`
  height: 19px; background: #f0f0f0;
  display: flex;
`;
const StatCol = styled.div`
  width: 100.500px;
  background: linear-gradient(#fefefe, #ebebeb);
  border-right: 1px solid #c4c4c4;
  border-bottom: 1px solid #b0b0b0;
  display: flex; align-items: center; justify-content: center;
`;
const BottomTabs = styled.div`
  height: 24px; display: flex;
  border-top: 1px solid #b9b9b9;
  margin-top: 2px;
  flex: none;
`;
const BTab = styled.div`
  width: ${(p) => p.$w}px;
  height: ${(p) => (p.$on ? 23 : 20)}px;
  border: 1px solid #b4b4b4; border-top: none;
  border-radius: 0 0 3px 3px;
  background: ${(p) => (p.$on ? "#f6f6f6" : "#dcdcdc")};
  display: flex; align-items: center; justify-content: center;
`;

const tree = [["star", "Favori"], ["book", "Spatia", 1], ["project", "Projec", 1], ["home", "Home", 1], ["folder", "C:\\ (O", 1], ["folder", "G:\\ (S", 1], ["geopkg", "GeoPa"], ["feather", "Spatia"], ["elephant", "Postg", 1], ["sap", "SAP H"], ["mssql", "MS SQ"], ["oracle", "Oracle"], ["earth", "WMS"], ["grid", "Vecto"], ["dots9", "XYZ T", 1], ["globeDark", "WCS"], ["wfs", "WFS /"], ["earth", "ArcGI"]];

const MapText = styled.text`
  font: ${(p) => (p.$i ? "italic " : "")}${(p) => p.$fs || 10}px "Noto Sans", sans-serif;
  fill: ${(p) => p.$c || "#444"};
  stroke: rgba(255, 255, 255, 0.7);
  stroke-width: 2px;
  paint-order: stroke;
`;
const MapView = () => (
  <svg width="1314" height="889" viewBox="301 122 1314 889">
    <MapText x="1121" y="425.500" textAnchor="end">malee</MapText>
    <MapText x="1197.500" y="577" textAnchor="end" $i $c="#8d618b">vince</MapText>
    <MapText x="1223.500" y="697" textAnchor="end" $c="#8d7aa5">ara</MapText>
    <MapText x="1221.500" y="708" textAnchor="end" $c="#8d7aa5">ict</MapText>
    <MapText x="1102.500" y="874" textAnchor="end">ra</MapText>
    <g transform="translate(1080 340) scale(.33333 .36995)" strokeLinejoin="round">
      <g fill="none" stroke="#9b93b2">
        <path strokeWidth="8" d="M40 20L58 42 70 57 98 73 118 95 128 120 138 160 170 182 197 206 212 252 220 278 233 304 237 350 250 385 272 428 292 440 312 468 335 515 341 538 378 568 425 628 450 680 464 740 488 800 496 855 492 940 503 985 497 1020 488 1055 480 1105 470 1145 450 1190 432 1240 412 1268 385 1304 330 1357 300 1380 257 1408 205 1448 150 1482 100 1498 50 1515" />
        <path strokeWidth="3" opacity=".55" d="M135 382L240 369M358 762L464 748M300 1244L385 1304" />
      </g>
      <g stroke="#232f3a" strokeWidth="2.600">
        <path fill="#c6dbef" d="M40 290L56 278 65 273 62 262 72 255 80 255 84 248 90 252 100 262 106 285 113 305 116 320 122 345 123 355 132 382 122 376 110 380 98 376 85 380 76 378 66 380 56 386 40 390z" />
        <path fill="#6fb0d7" d="M60 382L76 378 85 380 98 376 110 380 122 376 132 382 136 400 144 420 150 442 162 455 160 465 166 485 180 502 195 512 205 515 212 510 210 518 202 525 212 530 210 538 216 542 226 545 217 555 220 575 230 588 240 594 252 595 258 603 275 616 290 625 305 645 325 672 342 710 350 740 356 775 348 782 342 775 344 768 335 762 325 773 308 775 300 785 272 800 268 770 264 742 250 749 186 748 165 738 148 725 146 715 154 700 152 683 128 677 112 670 100 655 86 636 40 636V400z" />
        <path fill="#ededed" d="M40 388L56 386 66 380 80 382 79 440 77 495 90 520 94 536 80 533 70 538 56 534 40 536z" />
        <path fill="#2777b8" d="M40 636L86 636 100 655 112 670 128 677 152 683 154 700 146 715 148 725 165 738 186 748 250 749 264 742 268 770 272 800 300 780 320 772 335 764 344 768 342 775 348 782 356 778 362 792 372 808 384 838 382 900 379 945 389 988 382 1015 380 1045 373 1048 368 1075 362 1083 364 1100 358 1118 348 1130 345 1145 333 1165 335 1178 325 1200 310 1222 298 1242 285 1238 270 1228 256 1222 244 1210 200 1100 80 1000 40 890z" />
        <path fill="#c6dbef" d="M40 860L56 862 68 880 74 872 84 870 83 838 95 836 108 832 112 820 118 815 116 802 128 800 136 790 145 786 158 775 170 775 165 790 170 800 174 812 172 825 180 842 192 855 194 868 197 880 212 893 196 902 186 915 184 925 192 935 190 948 218 960 247 970 242 985 250 1005 257 1020 250 1130 244 1210 256 1222 270 1232 298 1244 270 1268 250 1283 245 1290 218 1312 184 1322 170 1340 150 1352 130 1370 110 1380 86 1394 40 1408z" />
        <path fill="none" d="M40 1328L60 1312 90 1305 110 1302 125 1292 145 1290 170 1292 174 1275 172 1258 190 1246 202 1238 220 1220 244 1212" />
      </g>
      <path fill="none" stroke="#9ccb9c" strokeWidth="2" opacity=".8" d="M300 1248L250 1290 218 1316 184 1330 140 1364M352 1134L328 1200 306 1236" />
    </g>
  </svg>
);

const StatusBar = styled.div`
  height: 28px; flex: none;
  display: flex; align-items: center;
  padding: 0 7px 0 4px;
`;

/* ---------- dialog ---------- */
const Dialog = styled.div`
  position: absolute; left: 69px; top: 100px;
  width: 1030px; height: 855px;
  border: 1px solid #585858;
  background: #f0f0f0;
  box-shadow: 0 4px 18px 3px rgba(0, 0, 0, 0.45);
  display: flex; flex-direction: column;
`;
const DTitle = styled.div`
  height: 30px; flex: none;
  background: #fff;
  display: flex; align-items: center;
  gap: 5px;
  padding: 0 9px 2px 8px;
`;
const DBody = styled.div`flex: 1; min-height: 0; display: flex;`;
const Side = styled.div`
  width: 197px; flex: none;
  background: #5c5c5c;
  display: flex; flex-direction: column;
`;
const SideSearch = styled.div`
  height: 22px; flex: none;
  margin-bottom: 14px;
  background: #fff;
  border: 1px solid #308cde;
  box-shadow: inset 0 0 0 .5px #6fb7f0;
  display: flex; align-items: center;
  padding-left: 8px;
  gap: 7px;
`;
const Caret = styled.i`width: 1px; height: 13px; background: #000;`;
const SideItem = styled.div`
  height: 36px; flex: none;
  display: flex; align-items: center;
  padding-left: ${(p) => (p.$on ? 7 : 4)}px;
  gap: 8px;
  background: ${(p) => (p.$on ? "#f0f0f0" : "none")};
  span { color: ${(p) => (p.$on ? "#000" : "#fff")}; }
`;
const SideList = styled.div`margin-top: -8px;`;
const Content = styled.div`
  flex: 1; min-width: 0;
  padding-right: 3px;
  display: flex; flex-direction: column;
`;
const Fill = styled.div`
  flex: 1; align-self: stretch;
  margin: 2px 3px 2px 0;
  ${(p) => (p.$ramp
    ? "background: linear-gradient(90deg,#f7fbff,#deebf7 13%,#c6dbef 26%,#9ecae1 39%,#6baed6 52%,#4292c6 65%,#2171b5 78%,#08519c 90%,#08306b);"
    : "background: #e5b636; border: 1px solid #7a6220;")}
`;
const Tabs = styled.div`
  height: 25px; margin-top: 6px; flex: none;
  display: flex; align-items: flex-end;
  border-bottom: 1px solid #b9b9b9;
`;
const Tab = styled.div`
  width: ${(p) => p.$w}px;
  height: ${(p) => (p.$on ? 25 : 22)}px;
  margin-bottom: ${(p) => (p.$on ? -1 : 0)}px;
  border: 1px solid #b4b4b4; border-bottom: none;
  ${(p) => !p.$on && "border-left: none;"}
  border-radius: 3px 3px 0 0;
  background: ${(p) => (p.$on ? "#f8f8f8" : "#e6e6e6")};
  display: flex; align-items: center; justify-content: center;
`;
const ClassTable = styled.div`
  height: 350px; margin-top: 9px; flex: none;
  border: 1px solid #b0b0b0;
  background: #fff;
`;
const THead = styled.div`
  height: 19px;
  background: linear-gradient(#fefefe, #e9e9e9);
  border-bottom: 1px solid #b0b0b0;
  display: flex;
`;
const TH = styled.div`
  width: ${(p) => p.$w}px;
  border-right: 1px solid ${(p) => (p.$last ? "transparent" : "#c4c4c4")};
  display: flex; align-items: center; justify-content: space-between;
  padding: 0 4px 0 2px;
`;
const TRow = styled.div`
  height: 18px;
  display: flex; align-items: center;
  padding-left: 3px;
  span { padding-bottom: 3px; }
`;
const Swatch = styled.div`
  width: 16px; height: 16px;
  background: ${(p) => p.$c};
  border: 1px solid #5d6a75;
  margin: 0 30px 0 6px;
  flex: none;
`;
const Group = styled.div`
  height: 139px; margin-top: 2px; margin-left: 1px; flex: none;
  background: #ececec;
  border: 1px solid #d6d6d6;
  border-radius: 2px;
  display: flex; flex-direction: column;
  padding: 10px 5px 0 1px;
`;
const Slider = styled.div`
  flex: 1; height: 14px;
  display: flex; align-items: center;
  padding-bottom: 1px;
`;
const Track = styled.div`
  flex: 1; height: 5px;
  background: #1a8aea;
  border: 1px solid #0f5ea8;
  border-radius: 2px 0 0 2px;
`;
const Knob = styled.div`
  width: 13px; height: 13px;
  border: 1px solid #9f9f9f; border-radius: 3px;
  background: #fcfcfc;
`;
const BlendGrid = styled.div`
  display: grid;
  grid-template-columns: 75px 371px 370px;
  grid-template-rows: 14px 24px;
  height: 38px;
  margin-top: 6px;
  > :first-child { grid-row: 1 / 3; align-self: start; padding-top: 13px; }
`;
const BlendLabel = styled.div`display: flex; align-items: center; line-height: 1;`;
const SideBySide = styled.div`display: flex; padding-right: 1px;`;
const Tooltip = styled.div`
  position: absolute; left: 224px; top: 356px;
  width: 50px; height: 21px;
  background: #ffffe1;
  border: 1px solid #000;
  box-shadow: 3px 3px 3px rgba(0, 0, 0, 0.4);
  display: flex; align-items: center; justify-content: center;
`;

const Eps = () => (
  <svg width="10" height="13" viewBox="5 3 15 17"><path d="M17.500 7.500C16.500 3 9 3 8.500 7c-.2 2.500 2 4 4.500 4-4.500 0-6.500 1.500-6 5 .7 4 9.500 4 11.500 0" fill="none" stroke="#6c3d78" strokeWidth="2.300" /></svg>
);

const sideItems = [["info", "Information"], ["source", "Source"], ["symbology", "Symbology"], ["labels", "Labels"], ["masks", "Masks"], ["cube", "3D View"], ["diagrams", "Diagrams"], ["fields", "Fields"], ["form", "Attributes Form"], ["joins", "Joins"], ["aux", "Auxiliary Storage"], ["act", "Actions"], ["display", "Display"], ["brush", "Rendering"], ["clock", "Temporal"], ["epsilonBig", "Variables"], ["elev", "Elevation"], ["meta", "Metadata"], ["deps", "Dependencies"], ["legend", "Legend"], ["server", "QGIS Server"], ["digit", "Digitizing"]];
const classes = [["#f7fbff", "19.00 - 852.00", "19 - 852"], ["#c8dcf0", "852.00 - 1970.00", "852 - 1970"], ["#73b3d8", "1970.00 - 2776.00", "1970 - 2776"], ["#2879b9", "2776.00 - 5737.00", "2776 - 5737"], ["#08306b", "5737.00 - 7522.00", "5737 - 7522"]];

const LayerDialog = () => (
  <Dialog>
    <DTitle>
      <Ico n="qgis" s={16} />
      <Ui $ls={-0.06}>Layer Properties — district — Symbology</Ui>
      <Grow />
      <svg width="11" height="11" viewBox="0 0 11 11"><path d="M.5.5l10 10M10.500.5l-10 10" stroke="#000" strokeWidth="1.100" /></svg>
    </DTitle>
    <DBody>
      <Side>
        <SideSearch><Ico n="search" s={13} /><Caret /></SideSearch>
        <SideList>
          {sideItems.map(([ic, t]) => (
            <SideItem key={t} $on={t === "Symbology"}><Ico n={ic} s={25} /><Ui $ls={-0.04}>{t}</Ui></SideItem>
          ))}
        </SideList>
      </Side>
      <SplitV $w={4} />
      <Content>
        <HRow $h={24} $mt={3}>
          <Field $combo $h={24} $pl={7}><Ico n="grad" s={14} /><Slot $w={3} /><Label>Graduated</Label><Grow /><DropCell $plain $w={21}><Arrow /></DropCell></Field>
        </HRow>
        <HRow $h={24} $mt={6}>
          <Label $w={76}>Value</Label>
          <Field $h={24} $pl={3}><Label $b $fs={9} $c="#555" $pt={0}>123</Label><Slot $w={2} /><Label $ls={0.2}>SLSolarPower_21_23_Total_estimated_energy_(GWh)</Label><Grow /><DropCell><Arrow /></DropCell></Field>
          <Slot $w={6} />
          <Button $w={24} $h={24}><Eps /></Button>
        </HRow>
        <HRow $h={27} $mt={6}>
          <Label $w={76}>Symbol</Label>
          <Field $combo $h={27}><Fill /></Field>
          <Slot $w={1} />
          <Button $w={12} $h={27}><Arrow /></Button>
        </HRow>
        <HRow $h={22} $mt={6}>
          <Label $w={76}>Legend format</Label>
          <Field $pl={3}><Label>%1 - %2</Label></Field>
          <Slot $w={6} />
          <Spin w={84} pl={2}>
            <Slot $w={39} $clip><Label $ls={-0.25}>ecision 0</Label></Slot>
            <Slot $w={4} />
            <svg width="13" height="10" viewBox="0 0 13 10"><path d="M4 0h9v10H4L0 5z" fill="#888" /><path d="M5 2.500l5 5M10 2.500l-5 5" stroke="#fff" strokeWidth="1.200" /></svg>
          </Spin>
          <Slot $w={6} />
          <Check on />
          <Slot $w={4} />
          <Label $w={27}>Trim</Label>
        </HRow>
        <HRow $h={22} $mt={6}>
          <Label $w={76}>Color ramp</Label>
          <Field $combo><Fill $ramp /></Field>
          <Slot $w={1} />
          <Button $w={12}><Arrow /></Button>
        </HRow>
        <Tabs>
          <Tab $on $w={60}><Label $pt={0}>Classes</Label></Tab>
          <Tab $w={71}><Label>Histogram</Label></Tab>
        </Tabs>
        <ClassTable>
          <THead>
            <TH $w={66}><Ui>Symbol</Ui><Arrow /></TH>
            <TH $w={95}><Ui>Values</Ui></TH>
            <TH $w={200} $last><Ui>Legend</Ui></TH>
          </THead>
          {classes.map(([c, v, l]) => (
            <TRow key={v}>
              <Check on /><Swatch $c={c} />
              <Slot $w={95}><Ui $ls={-0.3}>{v}</Ui></Slot><Ui $ls={-0.25}>{l}</Ui>
            </TRow>
          ))}
        </ClassTable>
        <HRow $h={24} $mt={6}>
          <Label $w={32}>Mode</Label>
          <Field $combo $w={158} $h={24} $pl={5}><Ico n="jenks" s={16} /><Slot $w={2} /><Label $ls={0.1}>Natural Breaks (Jenks)</Label><Grow /><DropCell $plain $w={21}><Arrow /></DropCell></Field>
          <Grow />
          <Label>Classes</Label><Slot $w={6} />
          <Spin w={68}><Label>5</Label></Spin>
        </HRow>
        <HRow $h={24} $mt={6} $gap={6}>
          <Button><Label $pt={0}>Classify</Label></Button>
          <Button $w={28} $h={24}><Ico n="plus" s={15} /></Button>
          <Button $w={28} $h={24}><Ico n="minus" s={15} /></Button>
          <Button><Label $pt={0}>Delete All</Label></Button>
          <Grow />
          <MenuButton $pl={9}><Label $pt={0}>Advanced</Label><Arrow $small /></MenuButton>
        </HRow>
        <HRow $h={14} $mt={8} $gap={4}><Check on /><Label>Link class boundaries</Label></HRow>
        <HRow $h={16} $mt={18} $pl={2} $gap={7}>
          <svg width="12" height="8" viewBox="0 0 12 8"><path d="M.5.5h11L6 7.500z" fill="#333" stroke="#111" /></svg>
          <Label $b $fs={11}>Layer Rendering</Label>
        </HRow>
        <Group>
          <HRow $h={20}>
            <Label $w={76}>Opacity</Label>
            <Slider><Track /><Knob /></Slider>
            <Slot $w={4} />
            <Spin w={100} topOff><Label>100.0 %</Label></Spin>
          </HRow>
          <BlendGrid>
            <BlendLabel><Label>Blending mode</Label></BlendLabel>
            <BlendLabel><Label $pt={0}>Layer</Label></BlendLabel>
            <BlendLabel><Label $pt={0}>Feature</Label></BlendLabel>
            <SideBySide><Field $combo $h={24} $pl={3}><Label>Normal</Label><Grow /><DropCell $plain $w={21}><Arrow /></DropCell></Field></SideBySide>
            <SideBySide><Field $combo $h={24} $pl={3}><Label>Normal</Label><Grow /><DropCell $plain $w={21}><Arrow /></DropCell></Field></SideBySide>
          </BlendGrid>
          <HRow $h={16} $mt={6} $gap={4}><Check /><Label>Draw effects</Label><Grow /><Button $off $w={24} $h={16}><Ico n="starGray" s={12} /></Button></HRow>
          <HRow $h={23} $mt={6} $gap={4}><Check /><Label $ls={0.08}>Control feature rendering order</Label><Grow /><Button $off $w={24} $h={23}><Ico n="az" s={16} /></Button></HRow>
        </Group>
        <HRow $h={22} $mt={6} $gap={6}>
          <MenuButton><Label $pt={0}>Style</Label><Arrow $small /></MenuButton>
          <Grow />
          <Button $focus><Label $pt={0}>OK</Label></Button>
          <Button><Label $pt={0}>Cancel</Label></Button>
          <Button><Label $pt={0}>Apply</Label></Button>
          <Button><Label $pt={0}>Help</Label></Button>
        </HRow>
      </Content>
    </DBody>
  </Dialog>
);

/* ---------- taskbar ---------- */
const TaskBar = styled.div`
  height: 40px; flex: none;
  background: #1c1c1c;
  display: flex;
`;
const Task = styled.div`
  width: ${(p) => p.$w || 49}px;
  display: flex; align-items: center; justify-content: center;
  flex: none;
  background: ${(p) => (p.$active ? "#484848" : "none")};
  box-shadow: ${(p) => (p.$run || p.$active ? "inset 0 -2px 0 #4d9cc4" : "none")};
  ${(p) => p.$run && "margin: 0 4.5px; width: 40px;"}
`;
const Count = styled.div`
  position: absolute; left: 468px; top: 1058px;
  width: 18px; height: 18px; border-radius: 50%;
  border: 1px solid #999;
  background: #2a2a2a;
  display: flex; align-items: center; justify-content: center;
`;
const Tray = styled.div`
  display: flex; align-items: center;
  gap: ${(p) => p.$gap || 0}px;
  flex: none;
`;
const Clock = styled.div`
  width: 64px;
  display: flex; flex-direction: column; align-items: center;
  gap: 2px;
`;
const T = ({ children, vb = "0 0 24 24", s = 24 }) => <svg width={s} height={s} viewBox={vb}>{children}</svg>;
const Letter = ({ x, y, fs, c, children, w = 700 }) => <text x={x} y={y} fontSize={fs} fontWeight={w} fontFamily={segoe} fill={c} textAnchor="middle">{children}</text>;

const TaskIcons = () => (
  <>
    <Task $w={48}><T s={16} vb="0 0 16 16"><path d="M0 2.300l7-1v6.200H0zM8 1.200L16 0v7.500H8zM0 8.500h7v6.200l-7-1zM8 8.500h8V16l-8-1.200z" fill="#fff" /></T></Task>
    <Task $w={48}><T><g fill="none" stroke="#fff" strokeWidth="2"><circle cx="14" cy="9.500" r="7.500" /><path d="M8.500 15l-6.500 7" /></g></T></Task>
    <Task $w={50.5}><T s={18}><path d="M3 1v4h11V1M3 23v-4h11v4M3 8h11v8H3z" fill="none" stroke="#fff" strokeWidth="1.700" /><path d="M20 1v4M20 12v11" stroke="#fff" strokeWidth="1.700" /><rect x="18.500" y="7" width="3" height="3" fill="#fff" /></T></Task>
    <Task><T><path d="M1 13C0 5 6 0 12.500 0 19 0 24 5 24 10c0 4-3 6-6 6-4 0-4-2-3-3 1-2-1-5-4-5-5 0-8 3-10 5z" fill="#3cc8a0" /><path d="M1 13c1-5 5-7 9-6-3 2-4 6-2 10 2 3 7 5 13 3-3 3-6 4-9 4C5 24 1 19 1 13z" fill="#1572c8" /><path d="M10 7c-4 3-4 8-1 11 3 3 8 3 12 1-3 6-13 6-16 0-2-5 0-11 5-12z" fill="#0c4f96" /></T></Task>
    <Task><T><path d="M1 3h8l2 3h12v15H1z" fill="#e9a92f" /><path d="M1 7h22v14H1z" fill="#fcd56b" /><path d="M5 13h14v8h-3v-4H8v4H5z" fill="#3f96e0" /></T></Task>
    <Task><T><path d="M7 6V2h10v4" fill="none" stroke="#2ea7e8" strokeWidth="2" /><rect x="1" y="5" width="22" height="18" rx="2" fill="#f3f3f3" /><path d="M7 9h4.500v4.500H7z" fill="#f25022" /><path d="M12.500 9H17v4.500h-4.500z" fill="#7fba00" /><path d="M7 14.500h4.500V19H7z" fill="#00a4ef" /><path d="M12.500 14.500H17V19h-4.500z" fill="#ffb900" /></T></Task>
    <Task><T><path d="M0 9l12-8 12 8z" fill="#1363b0" /><path d="M0 9h24v14H0z" fill="#2b9be8" /><path d="M3 9h18l-9 8z" fill="#eaf4fb" /><path d="M0 9l12 9L0 23z" fill="#38b0f5" /></T></Task>
    <Task $run><T><path d="M5 3l2-2.500h10L19 3l2.500-.5 1 4-1.500 9c-1 4-6 6-9 8.500-3-2.500-8-4.500-9-8.500l-1.500-9 1-4z" fill="#fb542b" /><g transform="translate(3.500 3.500) scale(.72)"><SiBrave size={24} color="#fff" /></g></T></Task>
    <Task $run><T><rect x="0" y="3" width="24" height="18" rx="4" fill="#f00" /><path d="M9.500 8l7 4-7 4z" fill="#fff" /></T></Task>
    <Task $run><T><circle cx="12" cy="12" r="11.500" fill="#fff" /><circle cx="12.300" cy="11.700" r="10.200" fill="#35c759" /><path d="M.5 23.500l1.500-7L8 22z" fill="#fff" /><g transform="translate(3.500 2.500) scale(.75)"><FaWhatsapp size={24} color="#fff" /></g></T></Task>
    <Task><T><rect width="24" height="24" fill="#3a4bf0" /><path d="M12 0h12v24H8z" fill="#2f7bf5" /><path d="M4 17l4-9 2 0-3 9zM9 17l5-11h2.500l-4.500 11zM15 17l3-9v9z" fill="#fff" /></T></Task>
    <Task><T><path d="M2 0h20v20l-10 4-10-4z" fill="#303030" /><Letter x={12} y={11} fs={8.500} c="#fff">EPIC</Letter><Letter x={12} y={17} fs={4.500} c="#fff">GAMES</Letter></T></Task>
    <Task><T><circle cx="12" cy="12" r="12" fill="#0b78e3" /><g fill="none" stroke="#fff" strokeWidth="1.300"><ellipse cx="12.500" cy="12" rx="7.500" ry="3.200" transform="rotate(20 12 12)" /><ellipse cx="12" cy="12" rx="7.500" ry="3.200" transform="rotate(75 12 12)" /><ellipse cx="12" cy="12" rx="7.500" ry="3.200" transform="rotate(130 12 12)" /></g></T></Task>
    <Task><T><path d="M12 0l10 6v12l-10 6-10-6V6z" fill="#686b70" /><path d="M12 0l10 6v12l-7-2z" fill="#46494e" /><path d="M12 5l6 11-6-2-5 3z" fill="#1d1f22" /><path d="M2 18l10-4 10 4-10 6z" fill="#a6a8ab" /></T></Task>
    <Task><T><path d="M10 1h4l6 19H4z" fill="#f58a1f" /><path d="M8.500 6h7l1.300 4H7.200zM6 14h12l1 3.500H5z" fill="#f3f3f3" /><path d="M3 19h18l2 4H1z" fill="#e8721a" /></T></Task>
    <Task><T><rect x="1.500" y="1.500" width="21" height="21" rx="4" fill="#001e36" /><Letter x={12} y={16.500} fs={12} c="#31a8ff">Ps</Letter></T></Task>
    <Task><T><path d="M12 1l9 5v12l-9 5-9-5V6z" fill="#dadada" /><path d="M6 6q6-3 12 0v12q-6 4-12 0z" fill="#b2151b" /><Letter x={12} y={17.500} fs={15} c="#f5dada">Z</Letter></T></Task>
    <Task $run><T><rect x="6" y="1" width="17.500" height="22" rx="1.500" fill="#2b7cd3" /><path d="M6 1h17.500v6H6z" fill="#41a5ee" /><path d="M6 17h17.500v6H6z" fill="#103f91" /><rect x="0" y="6" width="12.500" height="12.500" rx="1.500" fill="#185abd" /><Letter x={6.200} y={16} fs={10} c="#fff">W</Letter></T></Task>
    <Task><T><circle cx="12" cy="12" r="12" fill="#f4f6fa" /><path d="M12 3v3M12 7L6 19M12 7l6 12" stroke="#3c7bf0" strokeWidth="2.400" fill="none" /><circle cx="12" cy="7.500" r="2" fill="#34507a" /><path d="M6 13c3 3 9 3 12 0" stroke="#3ddc84" strokeWidth="2" fill="none" /></T></Task>
    <Task><T><path d="M7 2h15l-4 19H2z" fill="#9fd0dc" /><path d="M7 2h15l-.8 3.500H6z" fill="#cfe9ee" /><path d="M7 9h11M6 12h11M5.500 15h10" stroke="#5a93a3" /><path d="M18 21l4-19 1 3-3 17z" fill="#d8b060" /></T></Task>
    <Task><T><path d="M12 0l10 6v12l-10 6-10-6V6z" fill="#e4e4e4" /><g transform="translate(5 5)"><SiUnity size={14} color="#222" /></g></T></Task>
    <Task><T><path d="M1 4L10 0l13 5-2 16-9 3L0 19z" fill="#fc3d7c" /><path d="M12 0l11 6-1 15-9 3z" fill="#1a73f0" /><path d="M0 14l6 9 7 1-2-10z" fill="#fb8a1c" /><rect x="4" y="4" width="16" height="16" fill="#0a0a0a" /><Letter x={11} y={12.500} fs={8} c="#fff">IJ</Letter><path d="M6 17h6" stroke="#fff" /></T></Task>
    <Task><T><path d="M17 0l6.500 3v18L17 24z" fill="#2f9fe8" /><path d="M17 0v6L4 18.500l-3.500-2.500zM17 24v-6L4 5.500.5 8z" fill="#1878c0" /></T></Task>
    <Task><SiPostman size={24} color="#ff6c37" /></Task>
    <Task><T><rect width="24" height="24" rx="3" fill="#f47b20" /><g transform="translate(3 3)"><SiXampp size={18} color="#fff" /></g></T></Task>
    <Task><T><rect x="6" y="1" width="17.500" height="22" rx="1.500" fill="#21a366" /><path d="M6 12h17.500v11H6z" fill="#107c41" /><path d="M15 1h8.500v6H15z" fill="#33c481" /><rect x="0" y="6" width="12.500" height="12.500" rx="1.500" fill="#0e6839" /><Letter x={6.200} y={16} fs={10} c="#fff">X</Letter></T></Task>
    <Task $active><Ico n="qgis" s={23} /></Task>
  </>
);

const trayIcons = (
  <>
    <T s={12}><path d="M2 17L12 7l10 10" fill="none" stroke="#fff" strokeWidth="2.200" /></T>
    <T s={15}><g fill="none" stroke="#fff" strokeWidth="1.800"><rect x="5" y="6" width="11" height="12" rx="2" /><path d="M16 10l5-2v8l-5-2M5 2.500q6-3 12 0M5 21.500q6 3 12 0" /></g></T>
    <T s={17}><rect x="8" y="1" width="8" height="14" rx="4" fill="#fff" /><path d="M5 11c0 9 14 9 14 0M12 18v4M8 22.500h8" fill="none" stroke="#fff" strokeWidth="1.600" /></T>
    <T s={16}><g fill="none" stroke="#fff" strokeWidth="1.800"><rect x="7" y="8" width="15" height="10" /><path d="M23 11v4M4 4v5M8 4v5M2 9h8v3q-4 4-8 0zM6 15v4h6" /></g><rect x="9" y="10" width="9" height="6" fill="#fff" /></T>
    <T s={16}><path d="M2 9h4l6-6v18l-6-6H2zM15 9q3 3 0 6M18 6q6 6 0 12M21 3.500q8 8.500 0 17" fill="none" stroke="#fff" strokeWidth="1.600" /></T>
    <T s={16}><g fill="none" stroke="#fff" strokeWidth="1.800"><path d="M8 5h15v12H10M16 17v4M11 21.500h9" /><rect x="1" y="3" width="7" height="6" /><path d="M4.500 9v12H9" /></g></T>
  </>
);

export default function App() {
  return (
    <Screen>
      <Global />
      <TitleBar>
        <Ico n="qgis" s={16} />
        <Ui $c="#858585">*question d — QGIS</Ui>
        <Grow />
        <WinButtons>
          <T s={12} vb="0 0 12 12"><path d="M1 6.500h10" stroke="#777" /></T>
          <T s={12} vb="0 0 12 12"><path d="M1.500 3.500h7v7h-7zM3.500 3.500v-2h7v7h-2" fill="none" stroke="#777" /></T>
          <T s={12} vb="0 0 12 12"><path d="M1 1l10 10M11 1L1 11" stroke="#777" /></T>
        </WinButtons>
      </TitleBar>
      <Strip />
      <MenuBar>
        {menus.map(([a, u, b, w]) => <MenuItem key={a + u + b} $w={w}>{a}<u>{u}</u>{b}</MenuItem>)}
      </MenuBar>
      <Tools items={bar1} />
      <Tools items={bar2} />
      <Body>
        <LeftDock>
          <DockTitle><Ui>Browser</Ui></DockTitle>
          <DockTools><Ico n="addBox" s={16} /><Ico n="refresh" s={16} /><Ico n="filter" s={16} /></DockTools>
          <Tree $h={397}>
            {tree.map(([ic, t, ex], i) => (
              <TreeRow key={i}>
                <Expander $show={ex}><Arrow /></Expander>
                <Slot $w={22}><Ico n={ic} s={16} /></Slot>
                <Ui>{t}</Ui>
              </TreeRow>
            ))}
          </Tree>
          <DockTitle $mt={7}><Ui>Layers</Ui></DockTitle>
          <DockTools><Ico n="symbology" s={16} /><Ico n="layerNew" s={16} /><Ico n="eye" s={16} /></DockTools>
          <Tree $h={387}>
            <TreeRow><Expander $w={23}><Arrow /></Expander><Check /><Slot $w={10} /><Slot $w={19}><T s={8}><circle cx="12" cy="12" r="10" fill="#8a4a2a" stroke="#4a2312" strokeWidth="2" /></T></Slot><Ui $c="#b5651d">7</Ui></TreeRow>
            <TreeRow $sel><Expander $w={23} $show><Arrow /></Expander><Check on /><Slot $w={6} /><Slot $w={22}><Ico n="polyLayer" s={17} /></Slot><Ui $b><u>d</u></Ui></TreeRow>
            <TreeRow><Expander $w={23}><Arrow /></Expander><Slot $w={21}><Ico n="tableGray" s={16} /></Slot><Ui $b>SLSo</Ui></TreeRow>
            <TreeRow><Expander $w={23} $show $open><Arrow /></Expander><Check on /><Slot $w={8} /><Slot $w={20}><Ico n="raster" s={13} /></Slot><Ui $b>O</Ui></TreeRow>
          </Tree>
        </LeftDock>
        <MapFrame><MapView /></MapFrame>
        <SplitV $w={6} />
        <RightDock>
          <RTitle>
            <Ui>Statistics</Ui><Grow />
            <T s={12} vb="0 0 12 12"><rect x=".5" y=".5" width="11" height="11" rx="2.500" fill="#eee" stroke="#666" /><path d="M3 5.500h4v3.500H3zM5 5.500v-2.500h4.500v4H7" fill="none" stroke="#555" /></T>
            <T s={12} vb="0 0 12 12"><rect x=".5" y=".5" width="11" height="11" rx="2.500" fill="#eee" stroke="#666" /><path d="M3 3l6 6M9 3L3 9" stroke="#444" strokeWidth="2" /></T>
          </RTitle>
          <HRow $h={24}><Field $combo $h={24} $pl={5}><Ico n="tableGray" s={16} /><Slot $w={2} /><Label $ls={0.1}>SLSolarPower_21_23</Label><Grow /><DropCell $plain $w={22}><Arrow /></DropCell></Field></HRow>
          <HRow $h={22} $mt={3} $gap={6}><Field><Grow /><DropCell><Arrow /></DropCell></Field><Button $w={24}><Eps /></Button></HRow>
          <StatTable><StatHead><StatCol><Ui>Statistic</Ui></StatCol><StatCol><Ui>Value</Ui></StatCol></StatHead></StatTable>
          <HRow $h={22} $mt={3}>
            <Check /><Slot $w={3} /><Label>Selected features only</Label><Grow />
            <Ico n="copy" s={15} o={0.8} /><Slot $w={11} /><Ico n="refresh" s={16} /><Slot $w={7} />
            <Button $w={24} $h={21}><Label>…</Label><Arrow $small /></Button>
          </HRow>
          <BottomTabs><BTab $on $w={67}><Label>Statistics</Label></BTab><BTab $w={82}><Label $pt={0}>Search QMS</Label></BTab></BottomTabs>
        </RightDock>
      </Body>
      <StatusBar>
        <Field $w={200} $pl={8}><Ico n="search" s={13} /><Slot $w={6} /><Label $c="#777" $ls={0.1}>Type to locate (Ctrl+K)</Label></Field>
        <Grow />
        <Label $w={57}>Coordinate</Label>
        <Field $w={97} $pl={5}><Label>-222473, 486287</Label></Field>
        <Slot $w={5} /><Slot $w={28}><Ico n="mouse" s={16} /></Slot>
        <Label $w={29}>Scale</Label>
        <Field $w={80} $pl={3}><Label>1:2286434</Label><Grow /><DropCell><Arrow /></DropCell></Field>
        <Slot $w={12} /><Slot $w={21}><Ico n="lock" s={15} /></Slot>
        <Label $w={48}>Magnifier</Label>
        <Spin w={84} h={22}><Label>100%</Label></Spin>
        <Slot $w={8} />
        <Label $w={51}>Rotation</Label>
        <Spin w={83} h={22}><Label>0.0 °</Label></Spin>
        <Slot $w={7} /><Check on /><Slot $w={4} />
        <Label $w={52}>Render</Label>
        <Ico n="globeG" s={15} /><Slot $w={1} />
        <Label $w={76}>EPSG:5234</Label>
        <Ico n="bubble" s={17} />
      </StatusBar>
      <TaskBar>
        <TaskIcons />
        <Grow />
        <Tray>
          <Slot $w={29}><T s={22}><rect x="5" y="0" width="6" height="17" rx="3" fill="#a8d4f5" /><circle cx="8" cy="18.500" r="5" fill="#3d8fe0" /><path d="M15 6l4-4 4 4zM15 12l4-4 4 4z" fill="#e8302a" /><path d="M19 5v17" stroke="#e8302a" strokeWidth="2.400" /></T></Slot>
          <Slot $w={100}><Ui $fs={14} $c="#fff" $ls={-0.25}>Record high</Ui></Slot>
        </Tray>
        <Tray $gap={8}>{trayIcons}</Tray>
        <Tray>
          <Slot $w={6} />
          <Clock><Ui $c="#fff">2:16 PM</Ui><Ui $c="#fff" $ls={-0.1}>8/13/2023</Ui></Clock>
          <Slot $w={11} />
          <Slot $w={42}><T s={26}><path d="M1 2h15v12H8l-3 3v-3H1z" fill="#fff" /><path d="M3.500 5h10M3.500 8h10M3.500 11h6" stroke="#222" /><circle cx="16.500" cy="16" r="6.500" fill="#333" stroke="#aaa" /><Letter x={16.500} y={19.500} fs={9.500} c="#fff" w={400}>2</Letter></T></Slot>
        </Tray>
        <svg width="0" height="0">
          <defs><linearGradient id="joinFade"><stop offset="0" stopColor="#2a4d75" /><stop offset="1" stopColor="#6d9bd0" /></linearGradient></defs>
        </svg>
      </TaskBar>
      <Count><Ui $fs={11} $c="#fff">15</Ui></Count>
      <LayerDialog />
      <Tooltip><Ui $ls={-0.1}>3D View</Ui></Tooltip>
    </Screen>
  );
}
